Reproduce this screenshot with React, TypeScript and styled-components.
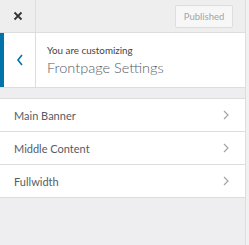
import styled, { createGlobalStyle } from 'styled-components';

const GlobalStyle = createGlobalStyle`
  html, body {
    margin: 0;
    padding: 0;
    background: #f1f1f1;
  }
  body {
    font-family: Lato, "Open Sans", sans-serif;
  }
`;

const Sidebar = styled.div`
  width: 245px;
  height: 245px;
  background: #eeeef0;
  border-right: 1px solid #dddddd;
  display: flex;
  flex-direction: column;
`;

const TopBar = styled.div`
  height: 32px;
  display: flex;
  align-items: center;
  justify-content: space-between;
  border-bottom: 1px solid #dddddd;
  background: #eeeeee;
`;

const CloseButton = styled.div`
  width: 35px;
  height: 32px;
  border-right: 1px solid #dddddd;
  display: flex;
  align-items: center;
  justify-content: center;
  color: #333;
`;

const PublishButton = styled.div`
  margin-right: 12px;
  width: 56px;
  height: 21px;
  border: 1px solid #dddddd;
  border-radius: 2px;
  background: #f7f7f7;
  color: #a0a5aa;
  font-size: 9.5px;
  display: flex;
  align-items: center;
  justify-content: center;
`;

const Header = styled.div`
  height: 54px;
  display: flex;
  background: #ffffff;
  border-bottom: 1px solid #dddddd;
`;

const BackButton = styled.div`
  width: 31px;
  border-left: 4px solid #0073aa;
  border-right: 1px solid #dddddd;
  display: flex;
  align-items: center;
  justify-content: center;
  color: #0073aa;
`;

const Notice = styled.div`
  padding: 11px 0 0 11px;
  display: flex;
  flex-direction: column;
  gap: 2px;
  color: #555d66;
`;

const Small = styled.span`
  font-size: 9.8px;
  line-height: 12px;
  color: #444;
`;

const Title = styled.span`
  font-size: 14.5px;
  font-weight: 300;
  line-height: 20px;
  color: #555d66;
`;

const List = styled.div`
  margin-top: 10px;
  background: #ffffff;
  border-top: 1px solid #dddddd;
`;

const Row = styled.div`
  height: 32px;
  padding: 0 14px;
  display: flex;
  align-items: center;
  justify-content: space-between;
  border-bottom: 1px solid #dddddd;
  font-size: 11px;
  color: #555d66;
`;

const Chevron = styled.svg`
  color: #a0a5aa;
  margin-right: 2px;
`;

const items = ['Main Banner', 'Middle Content', 'Fullwidth'];

export default function App() {
  return (
    <>
      <GlobalStyle />
      <Sidebar>
        <TopBar>
          <CloseButton>
            <svg width="10" height="10" viewBox="0 0 10 10">
              <path d="M1.5 1.5 L8.5 8.5 M8.5 1.5 L1.5 8.5" stroke="currentColor" strokeWidth="1.8" />
            </svg>
          </CloseButton>
          <PublishButton>Published</PublishButton>
        </TopBar>
        <Header>
          <BackButton>
            <svg width="8" height="12" viewBox="0 0 8 12">
              <path d="M6 1 L2 6 L6 11" stroke="currentColor" strokeWidth="1.6" fill="none" />
            </svg>
          </BackButton>
          <Notice>
            <Small>You are customizing</Small>
            <Title>Frontpage Settings</Title>
          </Notice>
        </Header>
        <List>
          {items.map((item) => (
            <Row key={item}>
              {item}
              <Chevron width="6" height="10" viewBox="0 0 6 10">
                <path d="M1 1 L5 5 L1 9" stroke="currentColor" strokeWidth="1.2" fill="none" />
              </Chevron>
            </Row>
          ))}
        </List>
      </Sidebar>
    </>
  );
}
